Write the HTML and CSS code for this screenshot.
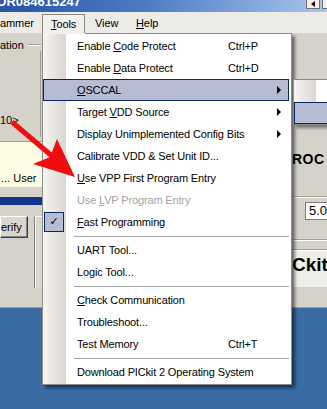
FILE: index.html
```html
<!DOCTYPE html>
<html lang="en">
<head>
  <meta charset="UTF-8" />
  <title>PICkit 2 - Tools menu</title>
  <link rel="stylesheet" href="styles.css">
</head>
<body>

<div class="screen">
  <div class="window">
    <div class="titlebar">
      <span class="title">DR084615247</span>
      <span class="tb-btn"><i class="tri-left"></i></span>
      <span class="tb-btn tb-edge"></span>
    </div>

    <div class="menubar">
      <span class="mb-item mb-first">ammer</span>
      <span class="mb-item mb-open"><u>T</u>ools</span>
      <span class="mb-item mb-view">View</span>
      <span class="mb-item mb-help"><u>H</u>elp</span>
    </div>

    <div class="client">
      <div class="col-left">
        <div class="grp">
          <div class="grp-head"><span>ation</span><i class="grp-line"></i></div>
          <div class="grp-body"><span class="cfg">10&gt;</span></div>
        </div>
        <div class="status"><span>... User</span></div>
        <div class="progress"></div>
        <div class="btn-row">
          <span class="btn">erify</span>
          <span class="btn btn-tall"></span>
        </div>
      </div>

      <div class="col-right">
        <div class="logo">ROC</div>
        <div class="etch etch-top"></div>
        <div class="vdd"><span class="vdd-box">5.0</span></div>
        <div class="etch etch-a"></div>
        <div class="etch etch-b"></div>
        <div class="brand">Ckit™</div>
      </div>
    </div>
  </div>

  <!-- Tools drop-down -->
  <div class="menu">
    <div class="mi"><span class="ico"></span><span class="lbl">Enable <u>C</u>ode Protect</span><span class="key">Ctrl+P</span><span class="arr"></span></div>
    <div class="mi"><span class="ico"></span><span class="lbl">Enable <u>D</u>ata Protect</span><span class="key">Ctrl+D</span><span class="arr"></span></div>
    <div class="mi hl"><span class="ico"></span><span class="lbl"><u>O</u>SCCAL</span><span class="key"></span><span class="arr sub"></span></div>
    <div class="mi"><span class="ico"></span><span class="lbl">Target <u>V</u>DD Source</span><span class="key"></span><span class="arr sub"></span></div>
    <div class="mi"><span class="ico"></span><span class="lbl wide">Display Unimplemented Config Bits</span><span class="key"></span><span class="arr sub"></span></div>
    <div class="mi"><span class="ico"></span><span class="lbl wide">Calibrate VDD &amp; Set Unit ID...</span><span class="key"></span><span class="arr"></span></div>
    <div class="mi"><span class="ico"></span><span class="lbl wide"><u>U</u>se VPP First Program Entry</span><span class="key"></span><span class="arr"></span></div>
    <div class="mi off"><span class="ico"></span><span class="lbl">Use <u>L</u>VP Program Entry</span><span class="key"></span><span class="arr"></span></div>
    <div class="mi"><span class="ico"><i class="chk">✓</i></span><span class="lbl"><u>F</u>ast Programming</span><span class="key"></span><span class="arr"></span></div>
    <div class="sep"></div>
    <div class="mi"><span class="ico"></span><span class="lbl">UART Tool...</span><span class="key"></span><span class="arr"></span></div>
    <div class="mi"><span class="ico"></span><span class="lbl">Logic Tool...</span><span class="key"></span><span class="arr"></span></div>
    <div class="sep"></div>
    <div class="mi"><span class="ico"></span><span class="lbl"><u>C</u>heck Communication</span><span class="key"></span><span class="arr"></span></div>
    <div class="mi"><span class="ico"></span><span class="lbl">Troubleshoot...</span><span class="key"></span><span class="arr"></span></div>
    <div class="mi"><span class="ico"></span><span class="lbl">Test Memory</span><span class="key">Ctrl+T</span><span class="arr"></span></div>
    <div class="sep"></div>
    <div class="mi"><span class="ico"></span><span class="lbl wide">Download PICkit 2 Operating System</span><span class="key"></span><span class="arr"></span></div>
  </div>

  <!-- OSCCAL sub menu, mostly off screen -->
  <div class="submenu">
    <div class="smi"></div>
    <div class="smi hl"></div>
  </div>

  <svg class="arrow" width="327" height="409" viewBox="0 0 327 409">
    <line x1="12" y1="122" x2="52" y2="156" stroke="#f00d0d" stroke-width="5" />
    <polygon points="75,177 33,164 50,157 57,139" fill="#f00d0d" />
  </svg>
</div>

</body>
</html>
```

FILE: styles.css
```css
body {
  margin: 0;
  font-family: "Liberation Sans", Arial, sans-serif;
  font-size: 11px;
  color: #000;
  background: #3a6ba5;
  overflow: hidden;
}
.screen {
  position: relative;
  width: 327px;
  height: 409px;
  overflow: hidden;
}
.window {
  height: 308px;
  display: flex;
  flex-direction: column;
}

/* title bar */
.titlebar {
  height: 12px;
  flex: none;
  display: flex;
  align-items: flex-start;
  overflow: hidden;
  background: linear-gradient(to right, #2753a9, #4e7bc4 45%, #a8c6ec);
}
.title {
  color: #fff;
  font-weight: bold;
  font-size: 13px;
  line-height: 12px;
  margin: -4px 0 0 -3px;
}
.tb-btn {
  margin-left: auto;
  width: 12px;
  height: 8px;
  margin-top: -1px;
  background: #f2f0e8;
  border: 1px solid #6f6f6f;
  display: flex;
  align-items: center;
  justify-content: center;
}
.tb-btn.tb-edge {
  margin-left: 2px;
  width: 4px;
  border-right: 0;
}
.tri-left {
  width: 0;
  height: 0;
  border-right: 4px solid #000;
  border-top: 3px solid transparent;
  border-bottom: 3px solid transparent;
}

/* menu bar */
.menubar {
  height: 21px;
  flex: none;
  display: flex;
  align-items: flex-end;
  background: #ecebe6;
  letter-spacing: -0.1px;
}
.mb-item {
  box-sizing: border-box;
  height: 19px;
  line-height: 19px;
}
.mb-first { width: 42px; }
.mb-open {
  width: 43px;
  padding-left: 8px;
  border: 1px solid #8d8b85;
  border-bottom: 0;
  background: #f2f1ee;
  line-height: 18px;
}
.mb-view { width: 51px; padding-left: 10px; }
.mb-help { padding-left: 0; }

/* application client area */
.client {
  flex: 1;
  display: flex;
  justify-content: space-between;
  background: #d5d2ca;
  border-bottom: 1px solid #a19e96;
  overflow: hidden;
}
.col-left {
  width: 42px;
  flex: none;
  overflow: hidden;
}
.grp {
  margin-top: 6px;
  width: 41px;
}
.grp-head {
  display: flex;
  align-items: center;
  height: 12px;
}
.grp-line {
  flex: 1;
  height: 0;
  margin-left: 4px;
  border-top: 1px solid #a09d95;
  border-bottom: 1px solid #fff;
}
.grp-body {
  height: 86px;
  border-right: 1px solid #a09d95;
}
.cfg {
  display: block;
  padding-top: 63px;
  line-height: 13px;
}
.status {
  margin-top: 4px;
  height: 45px;
  display: flex;
  align-items: flex-end;
  background: #fdfde6;
  border-top: 1px solid #9d9b93;
  line-height: 17px;
  padding-left: 1px;
}
.progress {
  margin-top: 10px;
  height: 8px;
  background: #15338a;
}
.btn-row {
  display: flex;
  margin-top: 11px;
}
.btn {
  box-sizing: border-box;
  width: 33px;
  height: 22px;
  line-height: 20px;
  border: 1px solid;
  border-color: #fff #404040 #404040 #fff;
  box-shadow: inset -1px -1px #808080;
  background: #d9d6ce;
}
.btn-tall {
  margin-left: 6px;
  width: 10px;
  height: 72px;
  border-right: 0;
  border-bottom: 0;
  border-left-color: #808080;
  box-shadow: inset 1px 0 #fff;
}

.col-right {
  width: 34px;
  flex: none;
  overflow: hidden;
}
.logo {
  margin-top: 119px;
  margin-left: -1px;
  font-weight: bold;
  font-size: 14px;
  line-height: 14px;
  letter-spacing: 0.5px;
  white-space: nowrap;
}
.etch {
  height: 0;
  border-top: 1px solid #a09d95;
  border-bottom: 1px solid #fff;
}
.etch-top { margin-top: 30px; }
.vdd {
  margin-top: 4px;
  padding-left: 12px;
  height: 18px;
}
.vdd-box {
  display: block;
  box-sizing: border-box;
  height: 18px;
  padding-left: 3px;
  line-height: 16px;
  font-size: 13px;
  background: #fff;
  border: 1px solid #7a7a7a;
  border-right: 0;
}
.etch-a { margin-top: 19px; }
.etch-b { margin-top: 8px; }
.brand {
  height: 36px;
  padding-top: 4px;
  box-sizing: border-box;
  margin-left: -1px;
  background: #efeee9;
  font-weight: bold;
  font-size: 19px;
  line-height: 20px;
  white-space: nowrap;
}

/* drop-down menu */
.menu {
  position: absolute;
  left: 42px;
  top: 33px;
  width: 246px;
  padding: 1px 2px 1px 0;
  border: 1px solid #8d8b85;
  background: linear-gradient(to right, #f6f5f2, #d9d6cf) 0 0 / 23px 100% no-repeat, #fff;
  box-shadow: 3px 3px 3px rgba(0, 0, 0, 0.5);
  letter-spacing: -0.15px;
}
.menu::before {
  content: "";
  position: absolute;
  top: -1px;
  left: 0;
  width: 42px;
  height: 1px;
  background: #f2f1ee;
}
.mi {
  display: grid;
  grid-template-columns: 34px 151px 1fr 16px;
  align-items: center;
  height: 22px;
  white-space: nowrap;
}
.mi.hl {
  background: #b6bdd2;
  box-shadow: inset 0 0 0 1px #0a246a;
}
.mi.off { color: #a3a3a3; }
.ico {
  height: 22px;
  display: flex;
  align-items: center;
}
.chk {
  box-sizing: border-box;
  width: 20px;
  height: 20px;
  margin-left: 1px;
  background: #b6bdd2;
  border: 1px solid #0a246a;
  font-style: normal;
  font-family: "DejaVu Sans", sans-serif;
  font-weight: bold;
  font-size: 11px;
  line-height: 18px;
  text-align: center;
}
.arr.sub::before {
  content: "";
  display: block;
  margin-left: 4px;
  width: 0;
  height: 0;
  border-left: 4px solid #000;
  border-top: 4px solid transparent;
  border-bottom: 4px solid transparent;
}
.sep {
  height: 0;
  margin: 3px 0 2px 31px;
  border-top: 1px solid #a6a5a8;
}

/* OSCCAL submenu */
.submenu {
  position: absolute;
  left: 293px;
  top: 79px;
  width: 60px;
  border: 1px solid #8d8b85;
  background: linear-gradient(to right, #f6f5f2, #d9d6cf) 0 0 / 22px 100% no-repeat, #fff;
  box-shadow: 3px 3px 3px rgba(0, 0, 0, 0.45);
}
.smi { height: 22px; }
.smi.hl {
  background: #b6bdd2;
  box-shadow: inset 0 0 0 1px #0a246a;
}

.arrow {
  position: absolute;
  left: 0;
  top: 0;
  pointer-events: none;
}
```
